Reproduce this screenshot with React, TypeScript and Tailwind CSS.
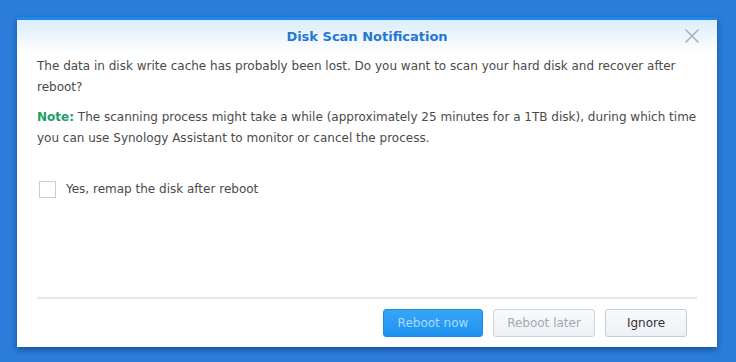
import { X } from 'lucide-react'

const font = { fontFamily: '"DejaVu Sans", Verdana, sans-serif' }

export default function App() {
  return (
    <div className="h-[362px] w-[736px] overflow-hidden bg-[#2b7dd9] pl-[17px] pt-[17px]" style={font}>
      <div className="flex h-[330px] w-[700px] flex-col border-t-[3px] border-[#1f88ea] bg-white shadow-[0_3px_6px_rgba(0,30,80,0.45)]">
        <div className="relative flex h-[34px] items-center justify-center bg-gradient-to-b from-[#dcedfc] to-white">
          <span className="text-[13px] font-bold text-[#1f77d6]">Disk Scan Notification</span>
          <X className="absolute right-[13px] top-[4px] h-[24px] w-[24px] text-[#a9b1b9]" strokeWidth={1.6} />
        </div>
        <div className="flex flex-1 flex-col px-[20px] pt-[2px] text-[12px] leading-[21px] text-[#4a4a4a]">
          <p>The data in disk write cache has probably been lost. Do you want to scan your hard disk and recover after reboot?</p>
          <p className="mt-[9px]">
            <b className="text-[#1d9e63]">Note:</b>{' '}
            The scanning process might take a while (approximately 25 minutes for a 1TB disk), during which time you can use Synology Assistant to monitor or cancel the process.
          </p>
          <label className="mt-[30px] flex items-center gap-[10px]">
            <span className="ml-[2px] h-[17px] w-[17px] border border-[#c5ced6] bg-white" />
            <span>Yes, remap the disk after reboot</span>
          </label>
        </div>
        <div className="mx-[20px] border-t-2 border-[#e6e6e6]" />
        <div className="flex h-[48px] items-center justify-end gap-[10px] pr-[30px] text-[12px]">
          <button className="h-[28px] w-[100px] rounded-[3px] border border-[#1e8ae0] bg-gradient-to-b from-[#36a7f5] to-[#1f90ef] text-[#a9dbff]">Reboot now</button>
          <button className="h-[28px] w-[102px] rounded-[3px] border border-[#cfd6dd] bg-gradient-to-b from-[#f8fafc] to-[#edf1f5] text-[#a3a9af]">Reboot later</button>
          <button className="h-[28px] w-[82px] rounded-[3px] border border-[#c5ced6] bg-gradient-to-b from-[#f8fafc] to-[#edf1f5] text-[#333]">Ignore</button>
        </div>
      </div>
    </div>
  )
}
